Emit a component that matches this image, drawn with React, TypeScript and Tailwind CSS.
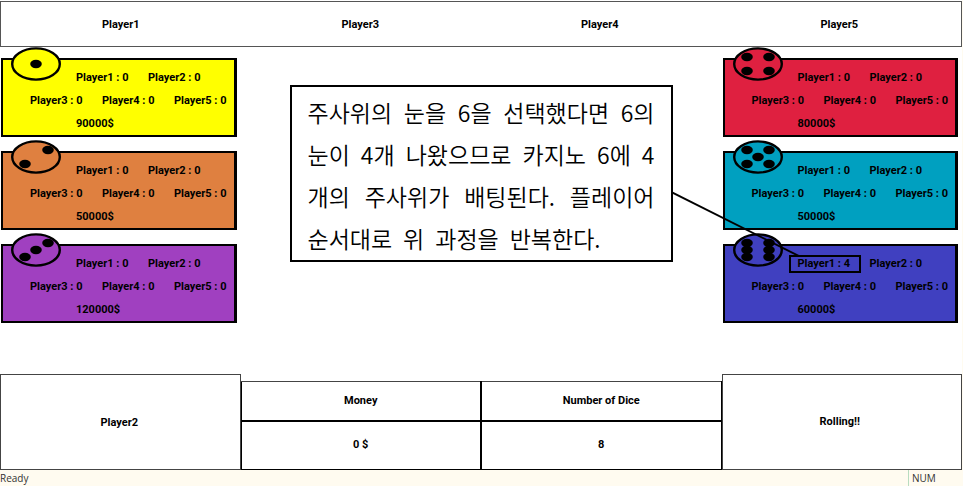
type Pip = [number, number];

type Casino = {
  color: string;
  pips: Pip[];
  dice: number[];
  prize: string;
  marked?: boolean;
};

const LEFT: Casino[] = [
  { color: "bg-[#ffff00] fill-[#ffff00]", pips: [[25, 17]], dice: [0, 0, 0, 0, 0], prize: "90000$" },
  { color: "bg-[#df8040] fill-[#df8040]", pips: [[37, 10], [14, 24]], dice: [0, 0, 0, 0, 0], prize: "50000$" },
  { color: "bg-[#a040c0] fill-[#a040c0]", pips: [[37, 10], [25, 17], [14, 24]], dice: [0, 0, 0, 0, 0], prize: "120000$" },
];

const RIGHT: Casino[] = [
  { color: "bg-[#df2040] fill-[#df2040]", pips: [[14, 10], [36, 10], [14, 24], [36, 24]], dice: [0, 0, 0, 0, 0], prize: "80000$" },
  { color: "bg-[#00a0c0] fill-[#00a0c0]", pips: [[14, 10], [36, 10], [25, 17], [14, 24], [36, 24]], dice: [0, 0, 0, 0, 0], prize: "50000$" },
  {
    color: "bg-[#4040c0] fill-[#4040c0]",
    pips: [[14, 10], [36, 10], [14, 17], [36, 17], [14, 24], [36, 24]],
    dice: [4, 0, 0, 0, 0],
    prize: "60000$",
    marked: true,
  },
];

function Die({ pips }: { pips: Pip[] }) {
  return (
    <svg className="absolute -top-[13px] left-2 h-[34px] w-[50px]" viewBox="0 0 50 34" aria-hidden="true">
      <ellipse cx="25" cy="17" rx="23.8" ry="15.6" stroke="#000" strokeWidth="2.4" />
      {pips.map(([x, y], i) => (
        <ellipse key={i} cx={x} cy={y} rx="5.8" ry="4.2" fill="#000" />
      ))}
    </svg>
  );
}

function Count({ player, dice, marked }: { player: number; dice: number; marked?: boolean }) {
  return (
    <span className="relative w-[72px] shrink-0 whitespace-nowrap">
      Player{player} : {dice}
      {marked && <span className="absolute -left-[9px] top-[3px] h-[18px] w-[72px] border-2 border-black" />}
    </span>
  );
}

function CasinoCard({ casino }: { casino: Casino }) {
  const { color, pips, dice, prize, marked } = casino;
  return (
    <article className={`relative h-[79px] border-2 border-r-[3px] border-black pt-1.5 leading-[23px] ${color}`}>
      <Die pips={pips} />
      <div className="flex pl-[73px]">
        <Count player={1} dice={dice[0]} marked={marked} />
        <Count player={2} dice={dice[1]} />
      </div>
      <div className="flex pl-[27px]">
        <Count player={3} dice={dice[2]} />
        <Count player={4} dice={dice[3]} />
        <Count player={5} dice={dice[4]} />
      </div>
      <div className="pl-[73px]">{prize}</div>
    </article>
  );
}

function Column({ casinos }: { casinos: Casino[] }) {
  return (
    <section className="flex flex-col gap-[14px] pl-px pr-1 pt-[11px]">
      {casinos.map((c, i) => (
        <CasinoCard key={i} casino={c} />
      ))}
    </section>
  );
}

function Note() {
  return (
    <aside className="relative z-10 border-2 border-black bg-white px-4 pb-px pt-1 font-['Noto_Sans_CJK_KR',sans-serif] text-[23px] font-[350] leading-[42px]">
      <p className="whitespace-nowrap [text-align-last:justify]">주사위의 눈을 6을 선택했다면 6의</p>
      <p className="whitespace-nowrap [text-align-last:justify]">눈이 4개 나왔으므로 카지노 6에 4</p>
      <p className="whitespace-nowrap [text-align-last:justify]">개의 주사위가 배팅된다. 플레이어</p>
      <p className="mr-[54px] whitespace-nowrap [text-align-last:justify]">순서대로 위 과정을 반복한다.</p>
      <svg className="absolute left-full top-[104px] h-[66px] w-[128px]" viewBox="0 0 128 66" aria-hidden="true">
        <path d="M0 1L128 65" stroke="#000" strokeWidth="2" />
      </svg>
    </aside>
  );
}

export default function App() {
  return (
    <div className="flex min-h-screen flex-col bg-white pb-0.5 pr-px font-[Roboto,sans-serif] text-[11px] font-bold text-black">
      <div className="flex flex-1 flex-col border-r border-[#fffbf0]">
        <header className="mt-px grid h-[46px] grid-cols-4 items-center border border-[#555] pr-0.5 pt-0.5 text-center">
          <span>Player1</span>
          <span>Player3</span>
          <span>Player4</span>
          <span>Player5</span>
        </header>

        <main className="grid flex-1 grid-cols-4">
          <Column casinos={LEFT} />
          <div className="col-span-2 px-[49px] pt-[38px]">
            <Note />
          </div>
          <Column casinos={RIGHT} />
        </main>

        <section className="grid h-24 grid-cols-4 items-end">
          <div className="flex h-full items-center justify-center border border-[#444] pr-0.5 pt-0.5">Player2</div>
          <table className="col-span-2 h-[89px] w-full table-fixed border-collapse text-center">
            <thead>
              <tr className="h-[39px]">
                <th className="border-b-2 border-l border-r-2 border-t border-black border-t-[#444]">Money</th>
                <th className="border-b-2 border-r border-t border-black border-t-[#444]">Number of Dice</th>
              </tr>
            </thead>
            <tbody>
              <tr>
                <td className="border-b border-l border-r-2 border-black">0 $</td>
                <td className="border-b border-r border-black">8</td>
              </tr>
            </tbody>
          </table>
          <button type="button" className="h-full border border-[#444] pr-1 font-bold">
            Rolling!!
          </button>
        </section>
      </div>

      <footer className="flex h-4 items-center justify-between bg-[#fffbf0] font-['Open_Sans',sans-serif] text-[10px] font-normal leading-4 text-[#333]">
        <span>Ready</span>
        <span className="w-[55px] border-l border-[#b8dcc0] pl-[3px]">NUM</span>
      </footer>
    </div>
  );
}
